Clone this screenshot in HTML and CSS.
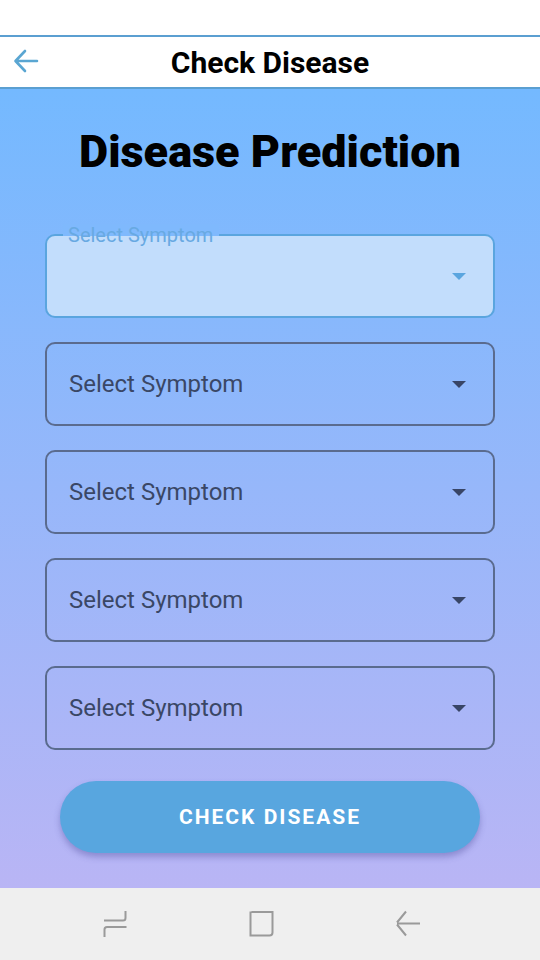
FILE: index.html
```
<!DOCTYPE html>
<html>
<head>
<meta charset="utf-8">
<link rel="stylesheet" href="styles.css">
</head>
<body>
<div class="screen">
  <div class="statusbar"></div>
  <header class="appbar">
    <svg class="back" width="26" height="26" viewBox="0 0 26 26"><path d="M24 13H3M12 3L2.5 13L12 23" fill="none" stroke="#5aa6d2" stroke-width="2.6" stroke-linecap="round" stroke-linejoin="round"/></svg>
    <h1 class="apptitle">Check Disease</h1>
  </header>
  <main class="content">
    <h2 class="heading">Disease Prediction</h2>
    <div class="fields">
      <div class="field field-active">
        <span class="float-label">Select Symptom</span>
        <span class="value"></span>
        <span class="caret caret-active"></span>
      </div>
      <div class="field"><span class="value">Select Symptom</span><span class="caret"></span></div>
      <div class="field"><span class="value">Select Symptom</span><span class="caret"></span></div>
      <div class="field"><span class="value">Select Symptom</span><span class="caret"></span></div>
      <div class="field"><span class="value">Select Symptom</span><span class="caret"></span></div>
    </div>
    <button class="cta">CHECK DISEASE</button>
  </main>
  <nav class="navbar">
    <svg width="26" height="28" viewBox="0 0 26 28"><path d="M1 10.5H20Q22.5 10.5 22.5 8V1" fill="none" stroke="#9a9a9a" stroke-width="2"/><path d="M1.5 27V19.5Q1.5 17 4 17H23.5" fill="none" stroke="#9a9a9a" stroke-width="2"/></svg>
    <svg width="26" height="28" viewBox="0 0 26 28"><path d="M2.5 2H24.5M23.5 2V22.5Q23.5 25.5 20.5 25.5H1.5V1.5" fill="none" stroke="#9a9a9a" stroke-width="2"/></svg>
    <svg width="26" height="28" viewBox="0 0 26 28"><path d="M2 13.5H25M11 1.5L2 12.5M2 14.5L11 25.5" fill="none" stroke="#9a9a9a" stroke-width="2"/></svg>
  </nav>
</div>
</body>
</html>
```
FILE: styles.css
```
* { box-sizing: border-box; }
html, body { margin: 0; padding: 0; }
body { font-family: Roboto, "Noto Sans", sans-serif; }
.screen {
  width: 540px;
  height: 960px;
  display: flex;
  flex-direction: column;
  overflow: hidden;
}
.statusbar {
  height: 37px;
  background: #ffffff;
  border-bottom: 2px solid #5b9fd1;
  flex: none;
}
.appbar {
  height: 52px;
  flex: none;
  background: #fff;
  border-bottom: 2px solid #5b9fd1;
  display: flex;
  align-items: center;
  justify-content: center;
  position: relative;
}
.back {
  position: absolute;
  left: 13px;
  top: 11px;
}
.apptitle {
  margin: 0;
  font-size: 30px;
  font-weight: 700;
  color: #000;
  letter-spacing: 0;
}
.content {
  flex: 1;
  background: linear-gradient(180deg, #74b9ff 0%, #b9b5f5 100%);
  display: flex;
  flex-direction: column;
  align-items: center;
  padding-top: 25px;
}
.heading {
  margin: 0;
  font-size: 45px;
  font-weight: 900;
  color: #000;
  line-height: 76px;
  height: 76px;
}
.fields {
  width: 450px;
  margin-top: 44px;
  display: flex;
  flex-direction: column;
  gap: 24px;
}
.field {
  height: 84px;
  border: 2px solid #5a6b8e;
  border-radius: 10px;
  display: flex;
  align-items: center;
  justify-content: space-between;
  padding: 0 27px 0 22px;
  position: relative;
}
.field-active {
  border: 2.5px solid #5aa5df;
  background: #c2ddfc;
}
.value {
  font-size: 24px;
  color: #3a4766;
}
.float-label {
  position: absolute;
  left: 16px;
  top: -12px;
  padding: 0 6px 0 5px;
  font-size: 20px;
  color: #68a9e2;
  background: linear-gradient(180deg, #7fb9fd 0%, #7fb9fd 50%, #c2ddfc 50%, #c2ddfc 100%);
  line-height: 23px;
}
.caret {
  width: 0;
  height: 0;
  border-left: 7px solid transparent;
  border-right: 7px solid transparent;
  border-top: 7px solid #384566;
}
.caret-active {
  border-top-color: #5aa5df;
}
.cta {
  margin-top: 31px;
  width: 420px;
  height: 72px;
  border: none;
  border-radius: 36px;
  background: #58a6df;
  color: #fff;
  font-family: Roboto, sans-serif;
  font-weight: 700;
  font-size: 21px;
  letter-spacing: 2px;
  box-shadow: 0 4px 6px rgba(60, 60, 140, 0.35);
}
.navbar {
  height: 72px;
  flex: none;
  background: #efefef;
  display: flex;
  align-items: center;
  justify-content: flex-start;
  gap: 120px;
  padding: 0 0 0 103px;
}
```
